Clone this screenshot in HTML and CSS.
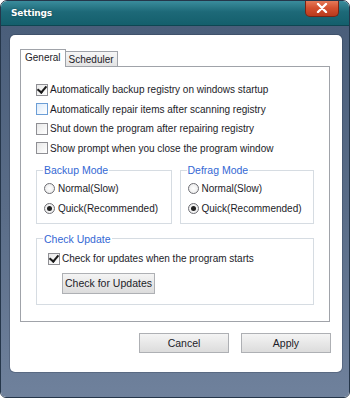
FILE: index.html
```html
<!DOCTYPE html>
<html lang="en">
<head>
    <meta charset="UTF-8">
    <title>Settings</title>
    <link rel="stylesheet" href="styles.css">
</head>
<body>
    <div class="window">
        <div class="titlebar">
            <span class="title">Settings</span>
            <button class="close" aria-label="Close">
                <svg width="12" height="10" viewBox="0 0 12 10"><path d="M2 1 L10 9 M10 1 L2 9" stroke="#fff" stroke-width="2.4" stroke-linecap="round"/></svg>
            </button>
        </div>
        <div class="frame">
            <div class="panel">
                <div class="tabs">
                    <span class="tab active">General</span>
                    <span class="tab">Scheduler</span>
                </div>
                <div class="pane">
                    <div class="options">
                        <label class="check"><span class="box checked"></span>Automatically backup registry on windows startup</label>
                        <label class="check"><span class="box hover"></span>Automatically repair items after scanning registry</label>
                        <label class="check"><span class="box"></span>Shut down the program after repairing registry</label>
                        <label class="check"><span class="box"></span>Show prompt when you close the program window</label>
                    </div>

                    <div class="modes">
                        <fieldset class="group backup">
                            <legend>Backup Mode</legend>
                            <label class="radio"><span class="dot"></span>Normal(Slow)</label>
                            <label class="radio"><span class="dot on"></span>Quick(Recommended)</label>
                        </fieldset>
                        <fieldset class="group defrag">
                            <legend>Defrag Mode</legend>
                            <label class="radio"><span class="dot"></span>Normal(Slow)</label>
                            <label class="radio"><span class="dot on"></span>Quick(Recommended)</label>
                        </fieldset>
                    </div>

                    <fieldset class="group update">
                        <legend>Check Update</legend>
                        <label class="check"><span class="box checked"></span>Check for updates when the program starts</label>
                        <button class="btn small">Check for Updates</button>
                    </fieldset>
                </div>
                <div class="actions">
                    <button class="btn">Cancel</button>
                    <button class="btn">Apply</button>
                </div>
            </div>
        </div>
    </div>
</body>
</html>
```

FILE: styles.css
```css
* {
    margin: 0;
    padding: 0;
    box-sizing: border-box;
}

body {
    background: #fff;
    font-family: 'Liberation Sans', Arial, sans-serif;
    font-size: 10px;
    color: #1c1c28;
}

.window {
    width: 350px;
    height: 398px;
    border: 1px solid #25364a;
    border-radius: 7px 7px 6px 6px;
    overflow: hidden;
    display: flex;
    flex-direction: column;
}

.titlebar {
    height: 25px;
    flex: none;
    display: flex;
    justify-content: space-between;
    align-items: flex-start;
    background: linear-gradient(#3a8c9c, #1d6978 45%, #145f6c);
    border-bottom: 1px solid #0e4652;
}

.title {
    margin: 7px 0 0 10px;
    color: #fff;
    font-family: 'DejaVu Sans', sans-serif;
    font-weight: bold;
    font-size: 9px;
    letter-spacing: -0.2px;
    text-shadow: 0 0 2px rgba(0,0,0,0.4);
}

.close {
    width: 34px;
    height: 17px;
    margin: -1px 10px 0 0;
    border: 1px solid #7a2414;
    border-top: none;
    border-radius: 0 0 5px 5px;
    background: linear-gradient(#e8805f, #d4502f 50%, #b93a1d);
    display: flex;
    align-items: center;
    justify-content: center;
    box-shadow: inset 0 1px 0 rgba(255,255,255,0.3);
}

.frame {
    flex: 1;
    padding: 9px 7px 24px 9px;
    background: linear-gradient(#4a5e7a, #5a6d88 50%, #6f819c);
}

.panel {
    background: #fff;
    border-radius: 5px;
    height: 337px;
    padding: 14px 12px 0 10px;
    box-shadow: 0 0 0 1px rgba(30,45,65,0.25);
}

.tabs {
    display: flex;
    align-items: flex-end;
    height: 17px;
}

.tab {
    height: 15px;
    padding: 0 3px 0 3px;
    border: 1px solid #a0a3a9;
    border-bottom: none;
    border-left: none;
    background: linear-gradient(#f6f6f6, #e4e4e4);
    line-height: 15px;
}

.tab.active {
    height: 18px;
    margin-bottom: -1px;
    padding: 0 4px 0 4px;
    border-left: 1px solid #a0a3a9;
    background: #fff;
    line-height: 16px;
    position: relative;
}

.pane {
    height: 256px;
    border: 1px solid #a0a3a9;
    padding: 16px 15px 0 15px;
}

.options {
    display: flex;
    flex-direction: column;
    gap: 6.5px;
}

.check, .radio {
    display: flex;
    align-items: center;
    height: 13px;
    white-space: nowrap;
}

.box {
    width: 12px;
    height: 12px;
    margin-right: 2px;
    border: 1px solid #8f8f94;
    background: linear-gradient(135deg, #e8e8e8, #fff);
    display: flex;
    align-items: center;
    justify-content: center;
    flex: none;
}

.box.hover {
    border-color: #6c9ed6;
    background: linear-gradient(135deg, #dcebfb, #fff);
}

.box.checked::after {
    content: "";
    width: 4px;
    height: 7px;
    margin-top: -2px;
    border: solid #1a1a1a;
    border-width: 0 2px 2px 0;
    transform: rotate(40deg);
}

.modes {
    display: flex;
    gap: 8px;
    margin-top: 8.5px;
}

.group {
    border: 1px solid #d6dce2;
    padding: 5px 6px 8px 7px;
    min-width: 0;
}

.backup {
    width: 136px;
}

.defrag {
    width: 135px;
}

.group legend {
    color: #3468d4;
    padding: 0 1px;
    margin-left: -1px;
    line-height: 14px;
    font-size: 10.5px;
}

.group .radio + .radio {
    margin-top: 6.5px;
}

.dot {
    width: 11px;
    height: 11px;
    margin-right: 3px;
    border: 1px solid #6e6e74;
    border-radius: 50%;
    background: radial-gradient(#fff, #e6e6e6);
    display: flex;
    align-items: center;
    justify-content: center;
    flex: none;
}

.dot.on::after {
    content: "";
    width: 5px;
    height: 5px;
    border-radius: 50%;
    background: #222;
}

.update {
    width: 278px;
    margin-top: 8px;
    padding: 6.5px 10px 10px 11px;
}

.update legend {
    margin-left: -5px;
}

.btn {
    font-family: inherit;
    font-size: 10.5px;
    color: #1c1c28;
    width: 90px;
    height: 20px;
    border: 1px solid #aeb0b4;
    background: linear-gradient(#f4f4f4, #e8e8e8 50%, #dcdcdc);
    white-space: nowrap;
}

.btn.small {
    display: block;
    width: 93px;
    height: 21px;
    margin: 7.5px 0 0 14px;
}

.actions {
    display: flex;
    justify-content: flex-end;
    gap: 12px;
    margin: 11px -1px 0 0;
}
```
